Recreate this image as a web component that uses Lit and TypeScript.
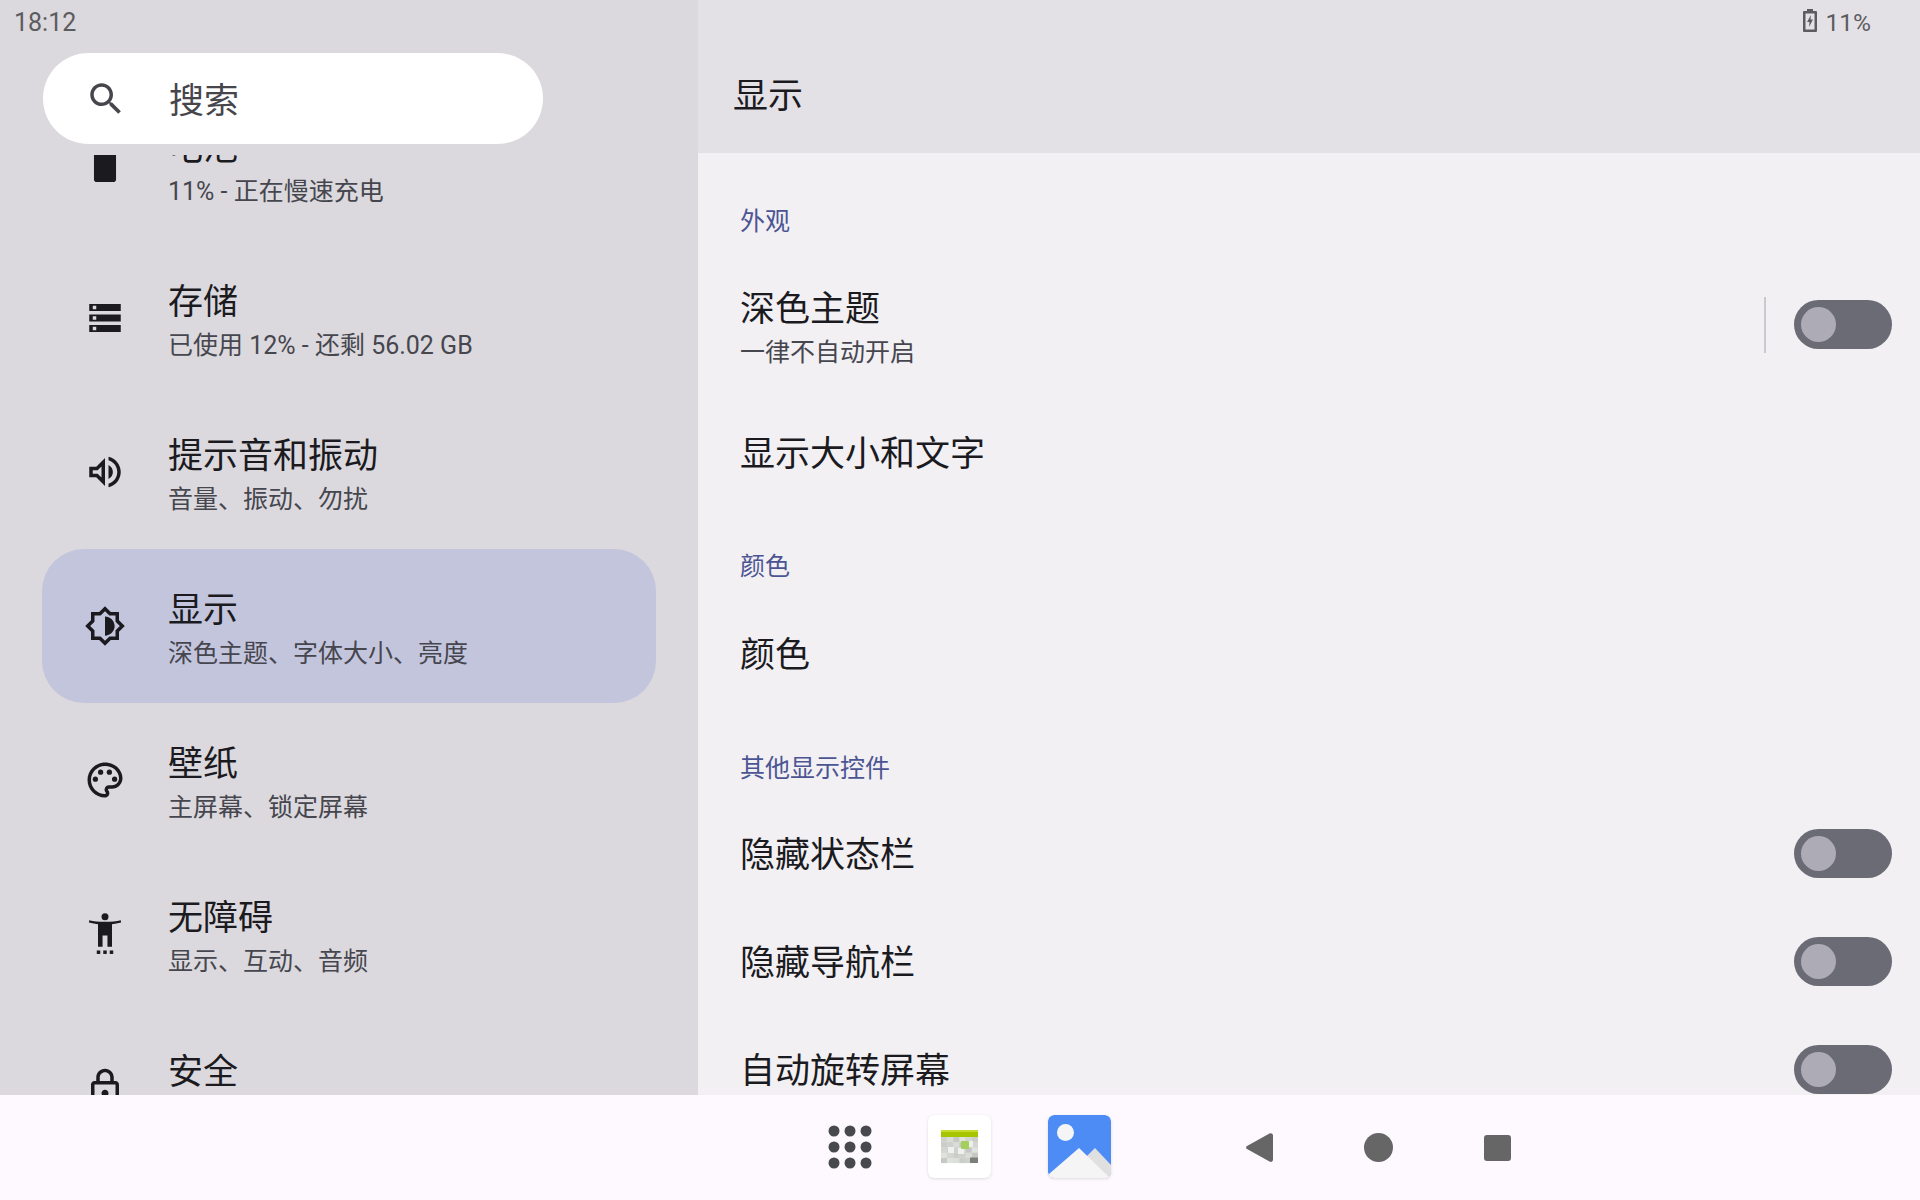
import { LitElement, html, css, svg } from "lit";
import { customElement } from "lit/decorators.js";

const ICONS: Record<string, any> = {
  battery: svg`<rect x="5.7" y="-2" width="12.6" height="24.3" rx="1.6" fill="#1b1b1f"/>`,
  storage: svg`<path fill-rule="evenodd" fill="#1b1b1f" d="M3 20h18v-4H3v4zm2-3h2v2H5v-2zM3 4v4h18V4H3zm4 3H5V5h2v2zm-4 7h18v-4H3v4zm2-3h2v2H5v-2z"/>`,
  sound: svg`<path fill="#1b1b1f" d="M3 9v6h4l5 5V4L7 9H3zm7-.17v6.34L7.83 13H5v-2h2.83L10 8.83zM16.500 12c0-1.770-1.020-3.290-2.500-4.030v8.050c1.480-.73 2.500-2.250 2.500-4.020zM14 3.230v2.060c2.890.86 5 3.540 5 6.710s-2.110 5.850-5 6.710v2.060c4.010-.91 7-4.490 7-8.770 0-4.280-2.990-7.860-7-8.770z"/>`,
  display: svg`<path fill="#1b1b1f" d="M20 15.310L23.310 12 20 8.690V4h-4.690L12 .69 8.690 4H4v4.690L.69 12 4 15.310V20h4.690L12 23.310 15.310 20H20v-4.690zM18 14.480V18h-3.520L12 20.480 9.520 18H6v-3.520L3.520 12 6 9.520V6h3.520L12 3.520 14.480 6H18v3.520L20.480 12 18 14.480zM12 6.500v11c3.030 0 5.500-2.470 5.500-5.500S15.030 6.500 12 6.500z"/>`,
  palette: svg`<path fill="#1b1b1f" d="M12 22C6.490 22 2 17.510 2 12S6.490 2 12 2s10 4.040 10 9c0 3.310-2.690 6-6 6h-1.770c-.28 0-.5.22-.5.5 0 .12.05.23.13.33.41.47.64 1.060.64 1.670 0 1.380-1.120 2.500-2.500 2.500zm0-18c-4.410 0-8 3.590-8 8s3.590 8 8 8c.28 0 .5-.22.5-.5 0-.16-.08-.28-.14-.35-.41-.46-.63-1.050-.63-1.650 0-1.380 1.120-2.500 2.500-2.500H16c2.210 0 4-1.790 4-4 0-3.860-3.590-7-8-7z"/><circle fill="#1b1b1f" cx="6.500" cy="11.500" r="1.500"/><circle fill="#1b1b1f" cx="9.500" cy="7.500" r="1.500"/><circle fill="#1b1b1f" cx="14.500" cy="7.500" r="1.500"/><circle fill="#1b1b1f" cx="17.500" cy="11.500" r="1.500"/>`,
  a11y: svg`<g fill="#1b1b1f"><circle cx="12" cy="2.100" r="2"/><path d="M3 4.100c2.600.6 5.200.9 9 .9s6.400-.3 9-.9l.2 1.300c-1.800.5-3.500.8-5.200 1V19.300h-2.600v-6.500h-2.800v6.500H8V6.400c-1.700-.2-3.400-.5-5.200-1z"/><rect x="7.300" y="21.400" width="2" height="2"/><rect x="11" y="21.400" width="2" height="2"/><rect x="14.700" y="21.400" width="2" height="2"/></g>`,
  lock: svg`<path fill="#1b1b1f" d="M18 8h-1V6c0-2.760-2.240-5-5-5S7 3.240 7 6v2H6c-1.100 0-2 .9-2 2v10c0 1.100.9 2 2 2h12c1.100 0 2-.9 2-2V10c0-1.100-.9-2-2-2zM9 6c0-1.660 1.340-3 3-3s3 1.340 3 3v2H9V6zm9 14H6V10h12v10zm-6-3c1.100 0 2-.9 2-2s-.9-2-2-2-2 .9-2 2 .9 2 2 2z"/>`,
};

const ROWS = [
  { icon: "battery", title: "电池", sub: "11% - 正在慢速充电" },
  { icon: "storage", title: "存储", sub: "已使用 12% - 还剩 56.02 GB" },
  { icon: "sound", title: "提示音和振动", sub: "音量、振动、勿扰" },
  { icon: "display", title: "显示", sub: "深色主题、字体大小、亮度", active: true },
  { icon: "palette", title: "壁纸", sub: "主屏幕、锁定屏幕" },
  { icon: "a11y", title: "无障碍", sub: "显示、互动、音频" },
  { icon: "lock", title: "安全", sub: "\u00a0" },
];

const CAL_CELLS: [number, number, string][] = [];
const SHADES = ["#cfd1cc", "#dadcd7", "#c6c8c3", "#e0e2de", "#d4d6d1", "#cbcdc8"];
for (let r = 0; r < 5; r++) {
  for (let c = 0; c < 6; c++) {
    CAL_CELLS.push([c, r, SHADES[(r * 5 + c * 7) % 6]]);
  }
}

@customElement("app-root")
export class AppRoot extends LitElement {
  static styles = css`
    :host {
      display: block;
      width: 1920px;
      height: 1200px;
      overflow: hidden;
      font-family: Roboto, "Noto Sans CJK SC", sans-serif;
      color: #1b1b1f;
    }
    .main { display: flex; height: 1095px; overflow: hidden; }
    .left { width: 698px; flex: none; background: #dbd9dd; display: flex; flex-direction: column; }
    .right { flex: 1; background: #f2f0f3; display: flex; flex-direction: column; overflow: hidden; }
    .status { height: 44px; flex: none; display: flex; align-items: center; font-size: 25px; color: #5c5c60; }
    .left .status { padding-left: 14px; }
    .right .status { justify-content: flex-end; padding-right: 49px; gap: 9px; font-size: 24.5px; }
    .status svg { display: block; margin-top: -3px; }
    .searchwrap { height: 111px; flex: none; padding: 9px 0 0 43px; box-sizing: border-box; }
    .search {
      width: 500px; height: 91px; border-radius: 46px; background: #fff;
      display: flex; align-items: center; padding-left: 42px; gap: 42px; box-sizing: border-box;
      font-size: 35px; color: #46464c;
    }
    .search span { padding-bottom: 2px; }
    .icon { width: 42px; height: 42px; flex: none; display: block; overflow: visible; }
    .list { flex: 1; overflow: hidden; }
    .list-inner { margin-top: -68px; }
    .row {
      width: 614px; height: 154px; margin-left: 42px; padding-left: 42px; box-sizing: border-box;
      display: flex; align-items: center; gap: 42px; border-radius: 42px;
    }
    .row.active { background: #c3c5dd; }
    .row-text { padding-top: 5px; }
    .title { font-size: 35px; line-height: 47px; }
    .sub { font-size: 25px; line-height: 33px; margin-top: 3px; color: #46464f; }
    .head { height: 153px; flex: none; background: #e3e1e6; display: flex; flex-direction: column; }
    .head-title { flex: 1; display: flex; align-items: center; padding: 0 0 12px 35px; font-size: 35px; }
    .content { flex: 1; overflow: hidden; }
    .cat {
      font-size: 25px; line-height: 33px; color: #4c5594;
      padding: 45px 0 14px 42px;
    }
    .cat.first { padding-top: 52px; padding-bottom: 15px; }
    .cat.tight { padding-top: 43px; padding-bottom: 16px; }
    .pref {
      height: 108px; display: flex; align-items: center; padding: 0 28px 0 42px; box-sizing: border-box;
    }
    .pref.two { height: 146px; padding-bottom: 3px; }
    .pref .text { flex: 1; padding-top: 4px; }
    .pref.two .text { padding-top: 6px; }
    .pref .text.up { padding-top: 2px; }
    .divider { width: 2px; height: 56px; background: #cbc9cd; margin-right: 28px; }
    .switch {
      width: 98px; height: 49px; border-radius: 25px; background: #6b6b75; flex: none;
      display: flex; align-items: center; padding-left: 7px; box-sizing: border-box;
    }
    .knob { width: 35px; height: 35px; border-radius: 50%; background: #adabb5; }
    .nav {
      height: 105px; background: #fdf9fe; display: flex; align-items: center; padding-left: 828px;
    }
    .nav svg { display: block; flex: none; }
    .dots { margin-top: -2px; }
    .apps { margin-left: 56px; }
    .gallery { margin-left: 57px; }
    .back { margin-left: 135px; }
    .home { margin-left: 91px; }
    .recent { margin-left: 91px; }
    .tile { width: 63px; height: 63px; margin-top: -2px; border-radius: 6px; overflow: hidden; filter: drop-shadow(0 1px 1.500px rgba(0,0,0,.12)); }
  `;

  private sw() {
    return html`<div class="switch"><div class="knob"></div></div>`;
  }

  render() {
    return html`
      <div class="main" lang="zh-CN">
        <section class="left">
          <div class="status">18:12</div>
          <div class="searchwrap">
            <div class="search">
              <svg class="icon" viewBox="0 0 24 24"><path fill="#46464c" d="M15.500 14h-.79l-.28-.27C15.410 12.590 16 11.110 16 9.500 16 5.910 13.090 3 9.500 3S3 5.910 3 9.500 5.910 16 9.500 16c1.610 0 3.090-.59 4.230-1.570l.27.28v.79l5 4.990L20.490 19l-4.990-5zm-6 0C7.010 14 5 11.990 5 9.500S7.010 5 9.500 5 14 7.010 14 9.500 11.990 14 9.500 14z"/></svg>
              <span>搜索</span>
            </div>
          </div>
          <div class="list">
            <div class="list-inner">
              ${ROWS.map(
                (r) => html`
                  <div class="row ${r.active ? "active" : ""}">
                    <svg class="icon" viewBox="0 0 24 24">${ICONS[r.icon]}</svg>
                    <div class="row-text">
                      <div class="title">${r.title}</div>
                      <div class="sub">${r.sub}</div>
                    </div>
                  </div>
                `
              )}
            </div>
          </div>
        </section>
        <section class="right">
          <header class="head">
            <div class="status">
              <svg width="14" height="23" viewBox="0 0 14 23">
                <path fill-rule="evenodd" fill="#5c5c60" d="M4 0h6v2h3a1 1 0 0 1 1 1v19a1 1 0 0 1-1 1H1a1 1 0 0 1-1-1V3a1 1 0 0 1 1-1h3zM2.500 4.500v16h9v-16z"/>
                <path fill="#5c5c60" d="M8 6 4 13h2.500L6 18l4-7.500H7.500z"/>
              </svg>
              <span>11%</span>
            </div>
            <div class="head-title">显示</div>
          </header>
          <div class="content">
            <div class="cat first">外观</div>
            <div class="pref two">
              <div class="text">
                <div class="title">深色主题</div>
                <div class="sub">一律不自动开启</div>
              </div>
              <div class="divider"></div>
              ${this.sw()}
            </div>
            <div class="pref"><div class="text up title">显示大小和文字</div></div>
            <div class="cat tight">颜色</div>
            <div class="pref"><div class="text title">颜色</div></div>
            <div class="cat">其他显示控件</div>
            <div class="pref"><div class="text title">隐藏状态栏</div>${this.sw()}</div>
            <div class="pref"><div class="text title">隐藏导航栏</div>${this.sw()}</div>
            <div class="pref"><div class="text title">自动旋转屏幕</div>${this.sw()}</div>
          </div>
        </section>
      </div>
      <footer class="nav">
        <svg class="dots" width="44" height="44" viewBox="0 0 44 44">
          ${[6, 22, 38].flatMap((y) =>
            [6, 22, 38].map((x) => svg`<circle cx=${x} cy=${y} r="5.500" fill="#48484f"/>`)
          )}
        </svg>
        <svg class="tile apps" viewBox="0 0 63 63">
          <rect width="63" height="63" rx="6" fill="#fff"/>
          <rect x="13" y="15" width="37" height="33" fill="#d6d8d3"/>
          ${CAL_CELLS.map(
            ([c, r, f]) => svg`<rect x=${13 + c * 6.200} y=${22 + r * 5.300} width="5.800" height="4.900" fill=${f}/>`
          )}
          <rect x="13" y="15" width="37" height="2" fill="#c8dc30"/>
          <rect x="13" y="17" width="37" height="5" fill="#a6c400"/>
          <rect x="20" y="32" width="6" height="6" fill="#f0f0ee"/>
          <rect x="30" y="33" width="6" height="6" fill="#f0f0ee"/>
          <rect x="39" y="26" width="6" height="6" fill="#eeeeec"/>
          <rect x="33" y="26" width="8" height="8" rx="1" fill="#a5cf5c"/>
          <rect x="25" y="43" width="6" height="5" fill="#dcdeda"/>
          <rect x="42" y="42.500" width="8" height="5.500" fill="#7d7f7b"/>
        </svg>
        <svg class="tile gallery" viewBox="0 0 63 63">
          <rect width="63" height="63" rx="6" fill="#4d8bf5"/>
          <circle cx="17.500" cy="17.500" r="8.500" fill="#f5f5f5"/>
          <path d="M47 33 63 50V63H30V50z" fill="#e0e0e0"/>
          <path d="M31 33 62 63H1V59z" fill="#f5f5f5"/>
        </svg>
        <svg class="back" width="27" height="29" viewBox="0 0 27 29">
          <path fill="#666" d="M1 13 23.500.5C25.200-.4 27 .6 27 2.500v24c0 2-1.800 3-3.500 2L1 16a1.700 1.700 0 0 1 0-3z"/>
        </svg>
        <svg class="home" width="29" height="29" viewBox="0 0 29 29"><circle cx="14.500" cy="14.500" r="14.500" fill="#666"/></svg>
        <svg class="recent" width="27" height="26" viewBox="0 0 27 26"><rect width="27" height="26" rx="3" fill="#666"/></svg>
      </footer>
    `;
  }
}
